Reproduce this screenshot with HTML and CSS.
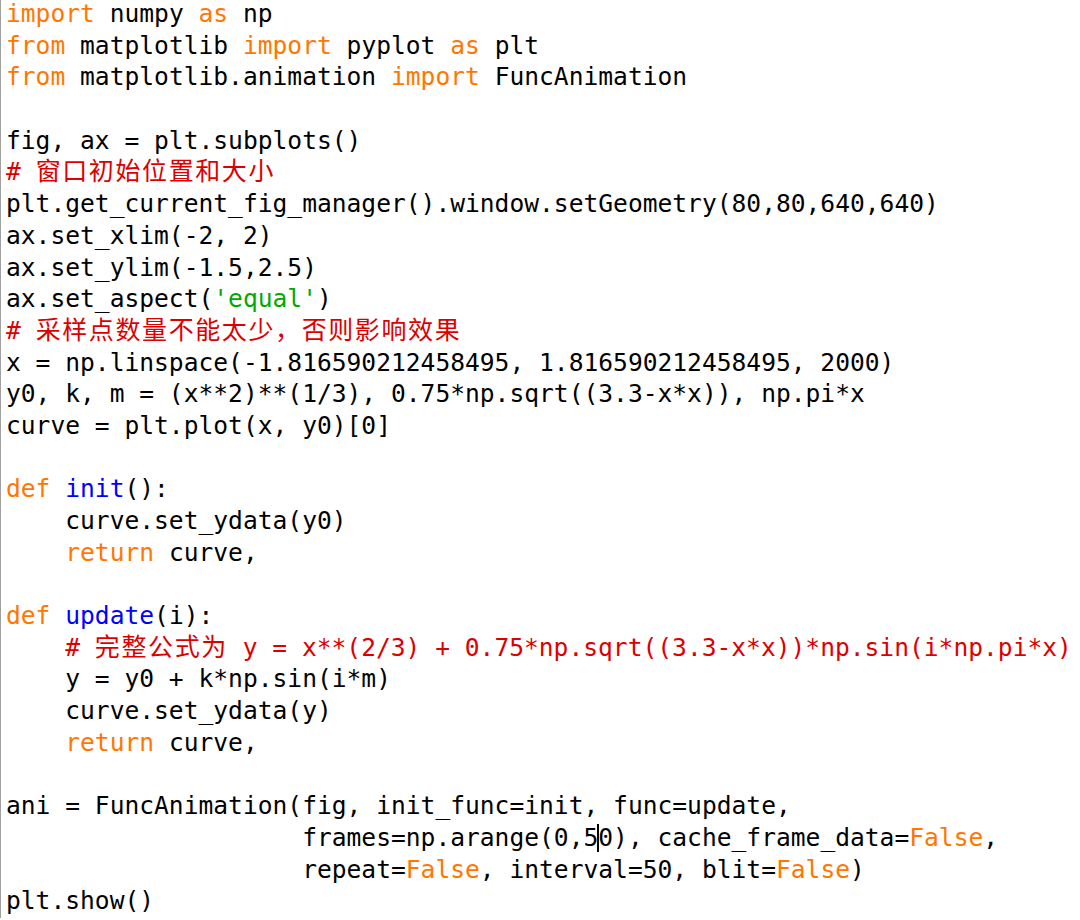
FILE: index.html
```html
<!DOCTYPE html>
<html>
<head>
<meta charset="utf-8">
<link rel="stylesheet" href="styles.css">
</head>
<body>
<div class="editor">
<pre class="code"><span class="kw">import</span> numpy <span class="kw">as</span> np
<span class="kw">from</span> matplotlib <span class="kw">import</span> pyplot <span class="kw">as</span> plt
<span class="kw">from</span> matplotlib.animation <span class="kw">import</span> FuncAnimation

fig, ax = plt.subplots()
<span class="cm"># <span class="cjk">窗口初始位置和大小</span></span>
plt.get_current_fig_manager().window.setGeometry(80,80,640,640)
ax.set_xlim(-2, 2)
ax.set_ylim(-1.5,2.5)
ax.set_aspect(<span class="str">'equal'</span>)
<span class="cm"># <span class="cjk">采样点数量不能太少，否则影响效果</span></span>
x = np.linspace(-1.816590212458495, 1.816590212458495, 2000)
y0, k, m = (x**2)**(1/3), 0.75*np.sqrt((3.3-x*x)), np.pi*x
curve = plt.plot(x, y0)[0]

<span class="kw">def</span> <span class="fn">init</span>():
    curve.set_ydata(y0)
    <span class="kw">return</span> curve,

<span class="kw">def</span> <span class="fn">update</span>(i):
    <span class="cm"># <span class="cjk">完整公式为</span> y = x**(2/3) + 0.75*np.sqrt((3.3-x*x))*np.sin(i*np.pi*x)</span>
    y = y0 + k*np.sin(i*m)
    curve.set_ydata(y)
    <span class="kw">return</span> curve,

ani = FuncAnimation(fig, init_func=init, func=update,
                    frames=np.arange(0,5<span class="caret"></span>0), cache_frame_data=<span class="kw">False</span>,
                    repeat=<span class="kw">False</span>, interval=50, blit=<span class="kw">False</span>)
plt.show()</pre>
</div>
</body>
</html>
```

FILE: styles.css
```css
html, body {
  margin: 0;
  padding: 0;
  background: #ffffff;
}
body {
  width: 1080px;
  height: 920px;
  overflow: hidden;
}
.editor {
  height: 920px;
  border-left: 1px solid #a0a0a0;
  padding-left: 5px;
  box-sizing: border-box;
}
.code {
  margin: -2px 0 0 0;
  font-family: "DejaVu Sans Mono", "Noto Sans CJK SC", monospace;
  font-size: 24.6px;
  line-height: 31.68px;
  color: #000000;
  white-space: pre;
}
.kw { color: #ff7700; }
.fn { color: #0000ff; }
.cm { color: #dd0000; }
.str { color: #00aa00; }
.cjk {
  font-family: "Noto Sans CJK SC", sans-serif;
  font-size: 25px;
  line-height: 16px;
  letter-spacing: 1.6px;
}
.caret {
  display: inline-block;
  width: 2px;
  height: 28px;
  margin: 0 -1px;
  background: #000000;
  vertical-align: -6px;
}
```
